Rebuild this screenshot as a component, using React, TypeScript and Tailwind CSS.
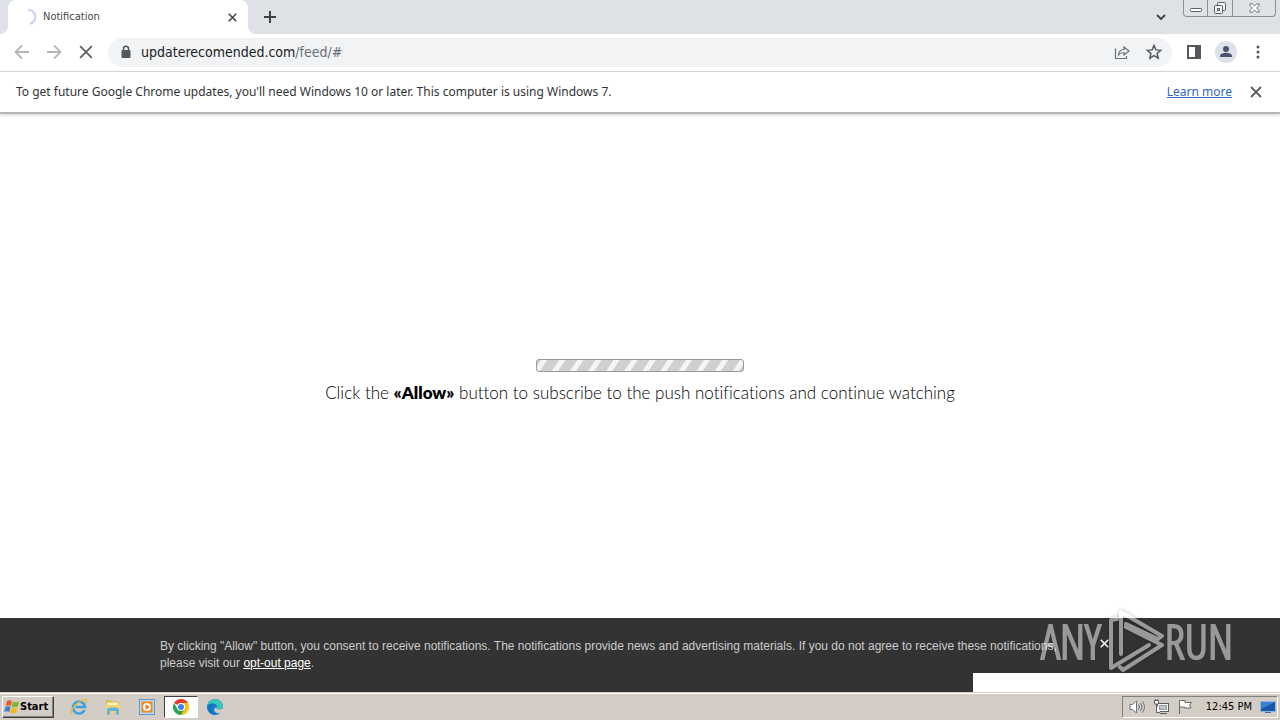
import type { ReactNode } from 'react';

function IconButton({ label, className = '', children }: { label: string; className?: string; children: ReactNode }) {
  return (
    <button type="button" aria-label={label} className={`flex shrink-0 items-center justify-center ${className}`}>
      {children}
    </button>
  );
}

function Cross({ size, className }: { size: number; className: string }) {
  return (
    <svg width={size} height={size} viewBox="0 0 12 12" className={className} fill="none" stroke="currentColor">
      <path d="M1 1 11 11M11 1 1 11" />
    </svg>
  );
}

function TabStrip() {
  return (
    <div className="flex h-[34px] bg-[#dee1e6]">
      <div className="flex w-2 bg-white">
        <div className="h-full w-full rounded-br-lg bg-[#dee1e6]" />
      </div>
      <div className="flex w-60 items-center rounded-t-lg bg-white pr-2 pl-3">
        <svg width="18" height="18" viewBox="0 0 18 18" fill="none" stroke="#c9d0f8" strokeWidth="2">
          <path d="M8 2a7 7 0 0 1 2 13.800" />
        </svg>
        <span className="ml-[5px] flex-1 text-[11px] leading-5 text-[#45474a]">Notification</span>
        <IconButton label="Close tab" className="h-4 w-4">
          <Cross size={9} className="stroke-2 text-[#3c4043]" />
        </IconButton>
      </div>
      <div className="flex w-2 bg-white">
        <div className="h-full w-full rounded-bl-lg bg-[#dee1e6]" />
      </div>
      <IconButton label="New tab" className="w-7">
        <svg width="12" height="12" viewBox="0 0 12 12" stroke="#3c4043" strokeWidth="2">
          <path d="M6 0V12M0 6H12" />
        </svg>
      </IconButton>
      <div className="flex-1" />
      <IconButton label="Search tabs" className="mr-[10px] w-6">
        <svg width="10" height="7" viewBox="0 0 10 7" fill="none" stroke="#3c4043" strokeWidth="1.800">
          <path d="m1 1 4 4 4-4" />
        </svg>
      </IconButton>
      <div className="mr-1 flex h-[17px] divide-x divide-[#8b8f96] rounded-b-[4px] border-x border-b border-[#8b8f96]">
        <IconButton label="Minimize" className="w-6">
          <svg width="12" height="16" viewBox="0 0 12 16" fill="#fff" stroke="#5a5d63">
            <rect x=".5" y="8.500" width="11" height="3" rx="1" />
          </svg>
        </IconButton>
        <IconButton label="Restore" className="w-[25px]">
          <svg width="14" height="16" viewBox="0 0 14 16" fill="#f1f3f5" stroke="#5a5d63">
            <rect x="4.500" y="2.500" width="8" height="8" rx="1" />
            <rect x="1.500" y="5.500" width="8" height="8" rx="1" />
            <rect x="4.500" y="8.500" width="2" height="2" />
          </svg>
        </IconButton>
        <IconButton label="Close window" className="w-[42px]">
          <svg width="11" height="10" viewBox="0 0 13 12" fill="#f8f8f8" stroke="#5a5d63">
            <path d="M1 1h3l2.500 2.500L9 1h3v2L9 6l3 3v2H9L6.500 8.500 4 11H1V9l3-3-3-3Z" />
          </svg>
        </IconButton>
      </div>
    </div>
  );
}

function Toolbar() {
  return (
    <div className="flex h-[38px] items-center border-b border-[#d9dadd] bg-white pb-px pl-[6px]">
      <IconButton label="Back" className="w-8">
        <svg width="16" height="16" viewBox="0 0 16 16" fill="none" stroke="#b4b6b9" strokeWidth="1.800">
          <path d="M15 8H2M8 1.500 1.500 8 8 14.500" />
        </svg>
      </IconButton>
      <IconButton label="Forward" className="w-8">
        <svg width="16" height="16" viewBox="0 0 16 16" fill="none" stroke="#b4b6b9" strokeWidth="1.800">
          <path d="M1 8h13M8 1.500 14.500 8 8 14.500" />
        </svg>
      </IconButton>
      <IconButton label="Stop" className="w-8">
        <Cross size={14} className="stroke-[1.6] text-[#5f6368]" />
      </IconButton>
      <form className="ml-[6px] flex h-[29px] flex-1 items-center rounded-full bg-[#f1f3f4] pr-[10px] pl-3" onSubmit={(e) => e.preventDefault()}>
        <svg width="12" height="14" viewBox="0 0 12 14" fill="none">
          <rect x="1.500" y="5" width="9" height="8" rx="1" fill="#54585d" />
          <path d="M3.500 6V3.800a2.500 2.500 0 0 1 5 0V6" stroke="#54585d" strokeWidth="1.500" />
        </svg>
        <div contentEditable suppressContentEditableWarning role="textbox" aria-label="Address" className="ml-[9px] flex-1 text-[14px] leading-5 text-[#6b6f74] outline-none">
          <span className="text-[#202124]">updaterecomended.com</span>/feed/#
        </div>
        <IconButton label="Share" className="w-8">
          <svg width="16" height="15" viewBox="0 0 16 15" fill="none" stroke="#6b6f74" strokeWidth="1.200">
            <path d="M1.500 3.500v10h11V11" />
            <path d="M4.500 10c.3-3.500 2-5.500 5.500-5.500V2l5 4-5 4V7.500C7.500 7.500 6 8 4.500 10Z" />
          </svg>
        </IconButton>
        <IconButton label="Bookmark" className="ml-2 w-4">
          <svg width="16" height="16" viewBox="0 0 16 16" fill="none" stroke="#54585d" strokeWidth="1.500">
            <path d="m8 1.500 1.900 4.400 4.800.4-3.600 3.200 1.100 4.600L8 11.600l-4.200 2.500 1.100-4.600L1.300 6.300l4.800-.4Z" />
          </svg>
        </IconButton>
      </form>
      <IconButton label="Side panel" className="ml-[6px] w-8">
        <svg width="14" height="14" viewBox="0 0 14 14">
          <path fill="#54585d" fillRule="evenodd" d="M0 0h14v14H0ZM2 2v10h6V2Z" />
        </svg>
      </IconButton>
      <IconButton label="Profile" className="h-[22px] w-8">
        <svg width="22" height="22" viewBox="0 0 22 22">
          <circle cx="11" cy="11" r="11" fill="#dde1e8" />
          <circle cx="11" cy="8" r="3" fill="#4a5670" />
          <path d="M5 16v-1c0-2.200 3.500-3.300 6-3.300s6 1.100 6 3.300v1Z" fill="#4a5670" />
        </svg>
      </IconButton>
      <IconButton label="Menu" className="mr-[6px] w-8">
        <svg width="4" height="14" viewBox="0 0 4 14" fill="#54585d">
          <circle cx="2" cy="2" r="1.500" />
          <circle cx="2" cy="7" r="1.500" />
          <circle cx="2" cy="12" r="1.500" />
        </svg>
      </IconButton>
    </div>
  );
}

function InfoBar() {
  return (
    <div className="flex h-[42px] items-center justify-between border-b-2 border-[#b5b5b5] bg-white pr-[18px] pl-4 font-['Noto_Sans',sans-serif] text-[12px] text-[#333] shadow-[0_1px_3px_rgba(0,0,0,0.2)]">
      <p>To get future Google Chrome updates, you'll need Windows 10 or later. This computer is using Windows 7.</p>
      <div className="flex items-center gap-[18px]">
        <a href="#learn" className="text-[#2f6ab8] underline">Learn more</a>
        <IconButton label="Dismiss">
          <Cross size={12} className="stroke-2 text-[#5f6368]" />
        </IconButton>
      </div>
    </div>
  );
}

function Watermark() {
  return (
    <div className="pointer-events-none absolute right-[47px] bottom-[19px] flex items-center font-['Open_Sans_Condensed_Light','Open_Sans_Condensed',sans-serif] text-[47px] leading-[64px] font-light text-white opacity-50">
      <span className="[-webkit-text-stroke:2px_currentColor]">ANY</span>
      <svg width="56" height="64" viewBox="0 0 56 64" fill="none" stroke="currentColor" strokeWidth="4" strokeLinejoin="round" strokeLinecap="round" className="ml-2 overflow-visible drop-shadow-[0_0_2px_rgba(0,0,0,0.5)]">
        <path d="M8 10 2 11v48l38-23" />
        <path d="M12 45V3l41 24-4 3-32-15" />
        <path d="m17 18 36 18-39 25-3-3" />
      </svg>
      <span className="[-webkit-text-stroke:2px_currentColor]">RUN</span>
    </div>
  );
}

function ConsentBar() {
  return (
    <footer className="relative bg-[#333]">
      <div className="mx-auto flex h-[74px] w-3/4 items-start justify-between pt-5 font-['Liberation_Sans',sans-serif] text-[12px] leading-[17px] text-[#ccc]">
        <p>
          By clicking "Allow" button, you consent to receive notifications. The notifications provide news and advertising materials. If you do not agree to receive these notifications,
          <br />
          please visit our <a href="#opt-out" className="text-white underline">opt-out page</a>.
        </p>
        <IconButton label="Close notice" className="mt-px mr-[11px]">
          <Cross size={9} className="stroke-2 text-white" />
        </IconButton>
      </div>
      <div className="absolute right-0 bottom-0 h-[19px] w-[307px] bg-white" />
      <Watermark />
    </footer>
  );
}

function StartFlag() {
  return (
    <svg width="16" height="16" viewBox="0 0 16 16">
      <path d="M3 2c2-1 3-1 5 0L6.800 7c-2-1-3-1-5 0Z" fill="#e8582b" />
      <path d="M9 2.500c2 1 4 1 6 0L13.700 7.500c-2 1-4 1-6 0Z" fill="#76b82e" />
      <path d="M1.500 8c2-1 3-1 5 0l-1.300 5c-2-1-3-1-5 0Z" fill="#3c7fd0" />
      <path d="M7.500 8.500c2 1 4 1 6 0l-1.300 5c-2 1-4 1-6 0Z" fill="#f6b91c" />
    </svg>
  );
}

function Taskbar() {
  return (
    <div className="flex h-7 items-center border-t border-[#d4d0c8] bg-[#d4cdc5] pr-[2px] pl-[2px] shadow-[inset_0_1px_0_#fff]">
      <button type="button" className="flex h-[22px] w-[52px] items-center border border-t-white border-r-[#404040] border-b-[#404040] border-l-white pl-px text-[11px] leading-5 font-bold text-black shadow-[inset_-1px_-1px_0_#808080]">
        <StartFlag />
        Start
      </button>
      <div className="ml-2 flex items-center">
        <IconButton label="Internet Explorer" className="h-[22px] w-[34px]">
          <svg width="18" height="18" viewBox="0 0 18 18" fill="none">
            <path d="M14.500 12A6 6 0 1 1 15 9H5.500" stroke="#3ba3e0" strokeWidth="2.600" />
            <path d="M2.500 15.500C0 17 1 12 5 7.500S15.500.5 16.500 2c.6 1-.3 2.500-1 3.500" stroke="#e9b93a" strokeWidth="1.300" />
          </svg>
        </IconButton>
        <IconButton label="File Explorer" className="h-[22px] w-[34px]">
          <svg width="16" height="16" viewBox="0 0 16 16">
            <path d="M1 1h5l1 1.500h7V14H1Z" fill="#dcbc55" />
            <path d="M2 3.500h11V8H2Z" fill="#faf0b4" />
            <path d="M1 6h14v8H1Z" fill="#f0d577" />
            <path d="M2 15.500V11c0-2 2.500-2.500 6-2.500s6 .5 6 2.500v4.500h-3V12H5v3.500Z" fill="#63b4dc" />
          </svg>
        </IconButton>
        <IconButton label="Media Player" className="h-[22px] w-[34px]">
          <svg width="16" height="16" viewBox="0 0 16 16">
            <rect x=".5" y=".5" width="15" height="15" fill="#b8d7f1" stroke="#5f9bcd" />
            <rect x="2.500" y="2.500" width="11" height="11" fill="#f28a1e" />
            <circle cx="8" cy="8" r="4" fill="#fff" />
            <path d="M6.500 5.300v5.400L10.800 8Z" fill="#ee7a12" />
          </svg>
        </IconButton>
        <IconButton label="Google Chrome" className="h-[22px] w-[34px] border border-t-[#404040] border-r-white border-b-white border-l-[#404040] bg-white">
          <svg width="16" height="16" viewBox="0 0 16 16">
            <path d="M8 8 1.070 4A8 8 0 0 1 14.930 4Z" fill="#e33b2e" />
            <path d="M8 8V4h6.930A8 8 0 0 1 8 16Z" fill="#fbc116" />
            <path d="M1.070 4 4.540 10 8 8l3.460 2L8 16A8 8 0 0 1 1.070 4Z" fill="#2da44e" />
            <circle cx="8" cy="8" r="4" fill="#fff" />
            <circle cx="8" cy="8" r="3" fill="#4285f4" />
          </svg>
        </IconButton>
        <IconButton label="Microsoft Edge" className="h-[22px] w-[34px]">
          <svg width="16" height="16" viewBox="0 0 16 16">
            <circle cx="8" cy="8" r="8" fill="#1688d2" />
            <path d="M.3 7C1 2.500 4.300 0 8 0c4.500 0 8 3 8 6.500C16 9 14 10.500 12 10.500c-1.500 0-2.500-.5-2.500-1 0-.4.600-.6.600-1.700C10.100 6 8 4.500 5.500 4.500 3 4.500 1.200 5.500.3 7Z" fill="#3cc6b8" />
            <path d="M.3 7C1.200 5.500 3 4.500 5.500 4.500 8 4.500 10 6 10 7.800c-2-1.300-4.500 0-4.500 2.700 0 2.500 2 4.700 4.500 5.300A8 8 0 0 1 .3 7Z" fill="#1474c4" />
            <path d="M9.500 9.600c0 .5 1 .9 2.500.9 1.600 0 3-.8 3.600-1.600l.8 3.100-2 1.600c-3 1.200-7 .4-7-2.600 0-1.200.8-2.200 2.100-3Z" fill="#d4cdc5" />
          </svg>
        </IconButton>
      </div>
      <div className="flex-1" />
      <div className="flex h-[22px] items-center border border-t-[#808080] border-r-white border-b-white border-l-[#808080] pr-px pl-[6px]">
        <div className="flex items-center gap-2">
          <svg width="16" height="16" viewBox="0 0 16 16" fill="none" stroke="#70757c">
            <path d="M1 5.500h2.500L7.500 2v12l-4-3.500H1Z" fill="#fff" />
            <path d="M9.500 5.500q2 2.500 0 5M11.500 4q3 4 0 8M13.500 2.500q4 5.500 0 11" />
          </svg>
          <svg width="16" height="16" viewBox="0 0 16 16" fill="#fff" stroke="#5c5f64">
            <rect x="4.500" y="4.500" width="11" height="8" />
            <rect x="6.500" y="6.500" width="7" height="4" fill="#bfc3c6" stroke="#9a9da1" />
            <path d="M7 14.500h7" />
            <path d="M1.500 1.500h4V5h-4ZM2.500 0v2M4.500 0v2M3.500 5v8.500H7" />
          </svg>
          <svg width="16" height="16" viewBox="0 0 16 16" fill="#fff" stroke="#66696e">
            <path d="M2.500 15V1.500H8v2h6.500l-2 2.500 1.500 3H7.500V8h-5" />
          </svg>
        </div>
        <time className="ml-[13px] text-[11px] leading-5 text-black">12:45 PM</time>
        <svg width="16" height="14" viewBox="0 0 16 14" className="ml-2">
          <path d="M0 1h16v11H0Z" fill="#8fb6dd" />
          <path d="M1 2h14v9H1Z" fill="#1c56ac" />
          <path d="M1 2h14L1 9Z" fill="#3b7fd0" />
          <path d="M5 12h6v1H5Z" fill="#476a92" />
        </svg>
      </div>
    </div>
  );
}

export default function App() {
  return (
    <div className="flex min-h-screen flex-col bg-white font-['DejaVu_Sans_Condensed','Noto_Sans',sans-serif]">
      <header>
        <TabStrip />
        <Toolbar />
        <InfoBar />
      </header>
      <main className="flex flex-1 flex-col items-center justify-center pt-8">
        <div role="progressbar" aria-label="Loading" className="h-[13px] w-52 rounded-[3px] border border-[#999] bg-[repeating-linear-gradient(124deg,#d0d0d0_0px,#d0d0d0_3px,#f5f5f5_4px,#f5f5f5_8px,#d0d0d0_9px,#d0d0d0_15px)]" />
        <p className="mt-[9px] font-['Lato',sans-serif] text-[17px] leading-6 font-light text-black [font-variant-ligatures:none]">
          Click the <b className="font-extrabold">«Allow»</b> button to subscribe to the push notifications and continue watching
        </p>
      </main>
      <ConsentBar />
      <Taskbar />
    </div>
  );
}
